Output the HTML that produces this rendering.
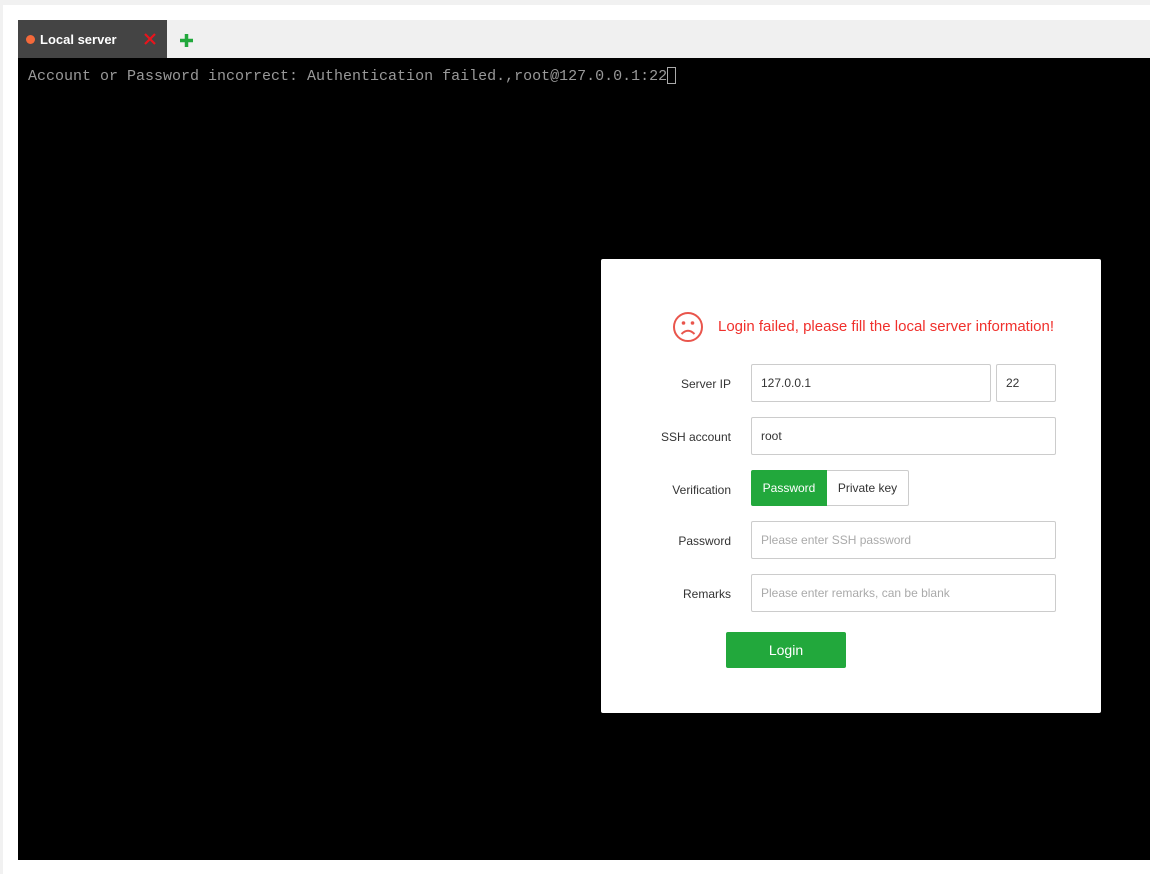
<!DOCTYPE html>
<html><head><style>
*{margin:0;padding:0;box-sizing:border-box}
body{width:1150px;height:874px;background:#f1f1f1;position:relative;overflow:hidden;font-family:"Liberation Sans",sans-serif}
.wrap{position:absolute;left:3px;top:5px;right:0;bottom:0;background:#fff}
.bar{position:absolute;left:18px;top:20px;width:1132px;height:38px;background:#f0f0f0}
.tab{position:absolute;left:0;top:0;width:149px;height:38px;background:#444;color:#fff;font-size:13px;font-weight:bold}
.dot{position:absolute;left:8px;top:15px;width:9px;height:9px;border-radius:50%;background:#f4693a}
.term{position:absolute;left:18px;top:58px;width:1132px;height:802px;background:#000}
.line{position:absolute;left:10px;top:9px;font-family:"Liberation Mono",monospace;font-size:15px;color:#999;white-space:pre}
.cur{display:inline-block;width:9px;height:17px;border:1px solid #aaa;vertical-align:-4px}
.dlg{position:absolute;left:601px;top:259px;width:500px;height:454px;background:#fff;border-radius:2px}
.msg{position:absolute;left:117px;top:59px;color:#f0302c;font-size:15px}
.lbl{position:absolute;right:370px;font-size:12px;color:#333;text-align:right;white-space:nowrap}
.inp{position:absolute;border:1px solid #ccc;border-radius:2px;font-size:12px;color:#333;padding-left:9px;display:flex;align-items:center}
.ph{color:#aaa}
</style></head><body>
<div class="wrap"></div>
<div class="bar">
 <div class="tab"><div class="dot"></div><span style="position:absolute;left:22px;top:12px">Local server</span>
 <svg style="position:absolute;left:126px;top:13px" width="12" height="12"><path d="M1 1L11 11M11 1L1 11" stroke="#e8141c" stroke-width="2.2"/></svg></div>
 <svg style="position:absolute;left:161px;top:13px" width="15" height="15"><path d="M7.5 1V14M1 7.5H14" stroke="#22a83c" stroke-width="3.5"/></svg>
</div>
<div class="term"><div class="line">Account or Password incorrect: Authentication failed.,root@127.0.0.1:22<span class="cur"></span></div></div>
<div class="dlg">
 <svg style="position:absolute;left:71px;top:52px" width="32" height="32" viewBox="0 0 32 32"><circle cx="16" cy="16" r="14" fill="none" stroke="#e9554c" stroke-width="2"/><circle cx="11.5" cy="12" r="1.8" fill="#e9554c"/><circle cx="20.5" cy="12" r="1.8" fill="#e9554c"/><path d="M9.5 23Q16 16.5 22.5 23" fill="none" stroke="#e9554c" stroke-width="2"/></svg>
 <div class="msg">Login failed, please fill the local server information!</div>
 <div class="lbl" style="top:118px">Server IP</div>
 <div class="inp" style="left:150px;top:105px;width:240px;height:38px">127.0.0.1</div>
 <div class="inp" style="left:395px;top:105px;width:60px;height:38px">22</div>
 <div class="lbl" style="top:171px">SSH account</div>
 <div class="inp" style="left:150px;top:158px;width:305px;height:38px">root</div>
 <div class="lbl" style="top:224px">Verification</div>
 <div style="position:absolute;left:150px;top:211px;width:76px;height:36px;background:#22a83c;color:#fff;font-size:12px;display:flex;align-items:center;justify-content:center;border-radius:2px 0 0 2px">Password</div>
 <div style="position:absolute;left:226px;top:211px;width:82px;height:36px;border:1px solid #ccc;border-left:none;color:#333;font-size:12px;display:flex;align-items:center;justify-content:center;border-radius:0 2px 2px 0">Private key</div>
 <div class="lbl" style="top:275px">Password</div>
 <div class="inp" style="left:150px;top:262px;width:305px;height:38px"><span class="ph">Please enter SSH password</span></div>
 <div class="lbl" style="top:328px">Remarks</div>
 <div class="inp" style="left:150px;top:315px;width:305px;height:38px"><span class="ph">Please enter remarks, can be blank</span></div>
 <div style="position:absolute;left:125px;top:373px;width:120px;height:36px;background:#22a83c;color:#fff;font-size:14px;display:flex;align-items:center;justify-content:center;border-radius:2px">Login</div>
</div>
</body></html>
